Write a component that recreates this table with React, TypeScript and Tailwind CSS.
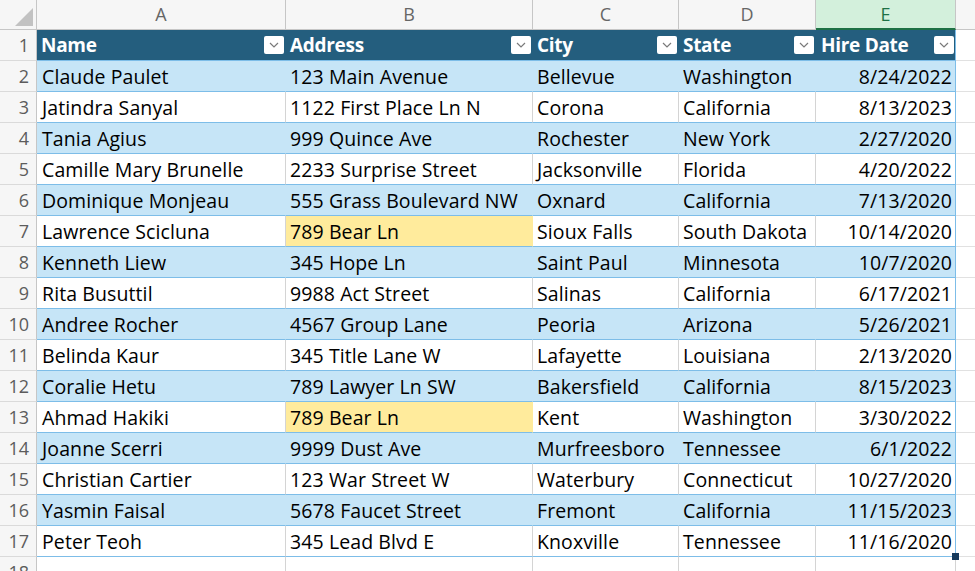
import React from 'react';

type Row = [string, string, string, string, string, boolean?];

const rows: Row[] = [
  ['Claude Paulet', '123 Main Avenue', 'Bellevue', 'Washington', '8/24/2022'],
  ['Jatindra Sanyal', '1122 First Place Ln N', 'Corona', 'California', '8/13/2023'],
  ['Tania Agius', '999 Quince Ave', 'Rochester', 'New York', '2/27/2020'],
  ['Camille Mary Brunelle', '2233 Surprise Street', 'Jacksonville', 'Florida', '4/20/2022'],
  ['Dominique Monjeau', '555 Grass Boulevard NW', 'Oxnard', 'California', '7/13/2020'],
  ['Lawrence Scicluna', '789 Bear Ln', 'Sioux Falls', 'South Dakota', '10/14/2020', true],
  ['Kenneth Liew', '345 Hope Ln', 'Saint Paul', 'Minnesota', '10/7/2020'],
  ['Rita Busuttil', '9988 Act Street', 'Salinas', 'California', '6/17/2021'],
  ['Andree Rocher', '4567 Group Lane', 'Peoria', 'Arizona', '5/26/2021'],
  ['Belinda Kaur', '345 Title Lane W', 'Lafayette', 'Louisiana', '2/13/2020'],
  ['Coralie Hetu', '789 Lawyer Ln SW', 'Bakersfield', 'California', '8/15/2023'],
  ['Ahmad Hakiki', '789 Bear Ln', 'Kent', 'Washington', '3/30/2022', true],
  ['Joanne Scerri', '9999 Dust Ave', 'Murfreesboro', 'Tennessee', '6/1/2022'],
  ['Christian Cartier', '123 War Street W', 'Waterbury', 'Connecticut', '10/27/2020'],
  ['Yasmin Faisal', '5678 Faucet Street', 'Fremont', 'California', '11/15/2023'],
  ['Peter Teoh', '345 Lead Blvd E', 'Knoxville', 'Tennessee', '11/16/2020'],
];

const headers = ['Name', 'Address', 'City', 'State', 'Hire Date'];
const letters = ['A', 'B', 'C', 'D', 'E'];

const FilterButton = () => (
  <div className="w-[20px] h-[18px] bg-white rounded-[2px] flex items-center justify-center shrink-0">
    <svg width="10" height="6" viewBox="0 0 10 6" fill="none">
      <path d="M1 1l4 4 4-4" stroke="#7a7a7a" strokeWidth="1.2" />
    </svg>
  </div>
);

const RowNum = ({ n }: { n: number }) => (
  <div className="h-[31px] bg-[#f6f6f6] border-b border-r border-b-[#dadada] border-r-[#c6c6c6] flex items-center justify-end pr-[7px] pt-[1px] text-[18px] text-[#5c5c5c]">
    {n}
  </div>
);

export default function App() {
  return (
    <div className="w-[975px] h-[571px] overflow-hidden bg-white" style={{ fontFamily: '"Open Sans", "Liberation Sans", sans-serif' }}>
      <div className="grid grid-cols-[37px_249px_247px_146px_137px_140px_19px]">
        {/* column letters */}
        <div className="h-[30px] bg-[#f6f6f6] border-b border-r border-[#c6c6c6] relative">
          <div className="absolute right-[3px] bottom-[3px] w-0 h-0 border-l-[18px] border-l-transparent border-b-[18px] border-b-[#c2c2c2]" />
        </div>
        {letters.map((l) => (
          <div
            key={l}
            className={
              l === 'E'
                ? 'h-[30px] bg-[#d3f0dc] border-b-2 border-r border-b-[#1e7145] border-r-[#c6c6c6] flex items-center justify-center text-[18px] text-[#1e7145]'
                : 'h-[30px] bg-[#f6f6f6] border-b border-r border-[#c6c6c6] flex items-center justify-center text-[18px] text-[#666666]'
            }
          >
            {l}
          </div>
        ))}
        <div className="h-[30px] bg-[#f6f6f6] border-b border-[#c6c6c6]" />

        {/* table header */}
        <RowNum n={1} />
        {headers.map((h, i) => (
          <div
            key={h}
            className={
              i === 4
                ? 'h-[31px] bg-[#245e7e] border-b border-r border-b-[#7dbde8] border-r-[#7dbde8] flex items-center justify-between pl-[5px] pr-[1px] text-[19px] font-bold text-white'
                : 'h-[31px] bg-[#245e7e] border-b border-b-[#7dbde8] flex items-center justify-between pl-[4px] pr-[2px] text-[19px] font-bold text-white'
            }
          >
            <span className="tracking-[-0.3px]">{h}</span>
            <FilterButton />
          </div>
        ))}
        <div className="h-[31px] border-b border-[#e1e1e1]" />

        {/* data rows */}
        {rows.map((r, idx) => {
          const banded = idx % 2 === 0;
          const fill = banded ? 'bg-[#c6e5f7] border-r-transparent' : 'bg-white border-r-[#d4d4d4]';
          const base = 'h-[31px] border-b border-r border-b-[#7dbde8] flex items-center pt-[1px] text-[19.5px] tracking-[0.1px] text-black whitespace-nowrap';
          const last = idx === rows.length - 1;
          return (
            <React.Fragment key={idx}>
              <RowNum n={idx + 2} />
              <div className={`${base} ${fill} pl-[5px] overflow-hidden`}>{r[0]}</div>
              <div className={`${base} ${r[5] ? 'bg-[#ffeb9c] border-r-transparent' : fill} pl-[4px] overflow-hidden`}>{r[1]}</div>
              <div className={`${base} ${fill} pl-[4px] overflow-hidden`}>{r[2]}</div>
              <div className={`${base} ${fill} pl-[4px] overflow-hidden`}>{r[3]}</div>
              <div className={`${base} ${banded ? 'bg-[#c6e5f7]' : 'bg-white'} border-r-[#7dbde8] justify-end pr-[3px] relative`}>
                {r[4]}
                {last && <div className="absolute -right-[4px] -bottom-[4px] w-[7px] h-[7px] bg-[#163a5c] z-10" />}
              </div>
              <div className="h-[31px] border-b border-[#e1e1e1]" />
            </React.Fragment>
          );
        })}

        {/* row 18 */}
        <RowNum n={18} />
        {[0, 1, 2, 3, 4].map((i) => (
          <div key={i} className="h-[31px] border-b border-r border-b-[#e1e1e1] border-r-[#d4d4d4]" />
        ))}
        <div className="h-[31px] border-b border-[#e1e1e1]" />
      </div>
    </div>
  );
}
